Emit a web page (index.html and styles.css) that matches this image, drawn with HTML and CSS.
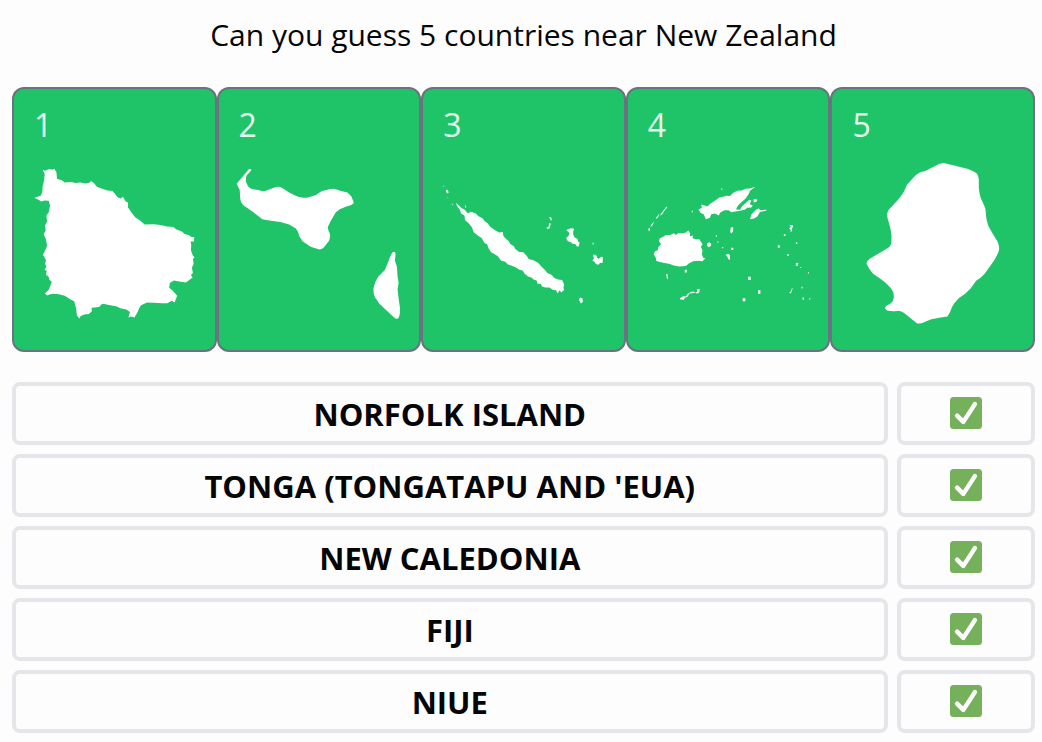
FILE: index.html
```
<!DOCTYPE html>
<html lang="en">
<head>
  <meta charset="UTF-8">
  <meta name="viewport" content="width=device-width, initial-scale=1.0">
  <title>Guess the Countries</title>
  <link rel="stylesheet" href="styles.css">
</head>
<body>
  <h1>Can you guess 5 countries near New Zealand</h1>

  <!-- Country cards -->
  <div class="cards">
    <div class="card">
      <span class="number">1</span>
      <svg class="map" viewBox="102 249 480 480" aria-hidden="true">
        <path d="M128 269L136 272L147 267L156 269L163 266L169 277L171 297L184 300L194 307L214 306L226 309L240 307L258 310L267 308L273 303L281 309L290 320L306 326L322 331L337 333L346 344L352 351L361 355L368 350L372 357L376 364L383 367L383 382L393 396L405 412L418 420L433 433L460 432L480 434L500 439L518 440L528 448L544 454L552 461L566 465L572 470L581 470L580 484L570 484L572 494L571 510L577 526L582 531L577 536L579 550L574 562L577 578L571 584L576 592L570 596L556 606L540 604L520 600L508 608L506 622L516 630L530 646L526 656L522 666L514 661L500 668L484 668L460 667L440 666L422 674L416 684L410 698L402 711L392 708L384 711L389 694L378 687L360 683L350 678L330 674L308 670L302 673L298 679L284 681L274 682L275 692L266 700L252 702L242 706L237 714L230 704L228 684L222 662L210 656L194 646L176 641L160 640L150 641L141 645L135 639L146 628L151 616L155 604L148 598L146 590L138 582L140 572L134 568L139 558L135 550L138 540L129 523L136 508L141 496L138 478L131 462L137 450L135 436L141 424L139 406L146 396L150 376L146 362L134 361L124 364L114 358L103 353L112 350L122 347L127 336L128 318L132 302L134 282Z"/>
      </svg>
    </div>
    <div class="card">
      <span class="number">2</span>
      <svg class="map" viewBox="80 249 480 480" aria-hidden="true">
        <path d="M110 267q6-1 7 4l-13 14q-6 9-2 23 5 14 16 19l20 3q14 6 24 1l24-9q12-5 22 1l22 14 24 12q20 6 34 2l22-6 14-10q14-6 38-9 10 1 20 6l22 5 12 12 7 18q-2 7-22 12l-20 8-12 10-14 24-10 20q2 12 7 20 0 16-4 22l-14 18q-6 8-16 6l-24-8-24-16-10-16q-3-14-10-22l-20-12-26-8-34-4-20-4-26-20-20-14q-18-10-20-26l-2-28-9-18z"/>
        <path d="M540 515q7-2 8 6l-2 20 6 18 2 30 3 18-3 20 4 34 3 20q2 24-6 33-6 2-12-4l-34-31-10-10-8-12q-10-12-9-34 4-20 14-34l20-20 10-24q6-20 14-30z"/>
      </svg>
    </div>
    <div class="card">
      <span class="number">3</span>
      <svg class="map" viewBox="82 249 480 480" aria-hidden="true">
        <path d="M121 368L132 378L138 384L146 388L156 399L166 395L180 400L188 408L200 414L206 422L216 430L224 440L238 450L250 457L261 455L262 466L268 474L278 482L284 492L294 498L298 506L310 515L322 516L332 526L338 536L352 540L366 547L376 558L386 568L394 578L406 583L414 592L426 597L438 599L444 612L442 622L444 628L436 636L430 629L425 639L420 629L410 628L400 621L388 621L378 618L374 610L364 610L362 600L354 598L346 591L336 588L326 580L320 570L310 568L300 561L288 556L276 552L268 544L256 541L246 528L234 520L226 516L218 504L214 492L206 488L198 474L184 464L174 456L168 440L158 428L148 420L146 406L136 400L132 388L124 378Z"/>
        <path d="M147 373l5 8-3 2zM91 330l5-1 3 8-4 3-4-4zM96 350l2 6-2-2zM108 370l4 4-3 1zM82 317l6 1-6 1zM399 411h6l3 8-4 2-2-5zM400 428l4 2-3 14-7 2-3-4 6-2zM450 449l9-3 4-2 8 1 3 1-3 8 0 8 4 9 9 5 2 8 4 2-2 12-5 1-6-8-8-1-6-5-8-2-5-10 7-6 3-8-3-4zM530 523l8 0 4 4-1 4 6 4 8-6 5 2-1 16-8 1-4 5-8-2-4-6-6-4 4-8zM488 657l4-6 7 3 1 10-6 5zM529 487h3l-1 8-2-4z"/>
      </svg>
    </div>
    <div class="card">
      <span class="number">4</span>
      <svg class="map" viewBox="83 249 480 480" aria-hidden="true">
        <path d="M234 388L244 383L242 373L250 375L260 379L270 370L284 361L296 352L308 350L318 347L328 348L338 338L350 332L364 331L374 326L388 325L404 320L388 332L384 342L374 356L362 366L352 376L346 388L358 389L364 378L376 368L386 359L392 361L387 372L396 376L392 382L380 383L372 389L358 392L344 394L332 396L324 390L312 390L300 396L294 406L284 400L272 402L268 413L256 417L250 403L240 398Z"/>
        <path d="M398 358l6-2 6 3-3 6-8 2zM388 417l4-14 14-14 8-4 5 5 18-1-1 3-18 3-8 14-10 6z"/>
        <path d="M138 379l3 3-8 8-6 10-7 7 0-3zM117 400l-3 10-6 6-2-2zM102 423l-6 13-6 5 3-8zM84 445l5-2 0 8-4 2z"/>
        <path d="M118 474L130 469L136 464L150 464L160 459L166 464L174 458L186 460L196 457L204 451L209 460L208 468L218 466L216 474L226 477L236 476L242 486L246 492L241 500L246 510L244 522L248 532L254 534L246 543L232 541L218 543L206 549L196 557L176 558L160 555L146 550L128 547L108 542L107 534L100 522L104 513L112 510L114 500L122 492L116 484Z"/>
        <path d="M330 443l5-3 3 3-1 11-5 6-3-5zM260 489l6-3 6 4-1 6-6 5-6-5zM315 524l8-4 5 5 0 14-6-4-1-5zM332 502h6v7h-6zM193 568h6v8h-6zM137 581l4 0 2 12-3 4zM178 654l10-7 8 1 6-8 10-6 8 0 5 3 6-4-2-6 8-2 0 9-5 5-10-2-8 1-8 1-4 9-8 4-4 6-10-1z"/>
        <path d="M286 464h2v6h-2zM291 483h2v5h-2zM305 500h3v4h-3zM302 325h3v4h-3zM214 392h3v4h-3zM382 589h8v10h-8zM412 629h7v11h-7zM366 653h8v9h-8zM505 434l10 0 2 6-4 4 1 8-5 4 1-7-5-4 5-6zM489 462h5v5h-5zM471 495h6v7h-6zM499 522h5v5h-5zM525 486h4v5h-4zM525 547l8 2-3 8-5-1zM538 560h3v3h-3zM561 575h3v4h-3zM514 621l1 4-5 14-5-2 5-5zM542 619h3v5h-3zM545 651h4v7h-4zM565 653h3v4h-3z"/>
      </svg>
    </div>
    <div class="card">
      <span class="number">5</span>
      <svg class="map" viewBox="85 249 480 480" aria-hidden="true">
        <path d="M335 257q12-8 24-8l22 5 36 9q28 6 40 17 7 8 7 24l0 20q2 20 6 30l10 22q6 12 5 28 2 20 8 34l10 18 16 26q8 14 5 29-6 16-16 32l-26 36-12 12-14 10-16 22-16 16-20 14q-14 14-20 26-4 14-14 29l-20 3-28 5-20 8q-16 8-24 3l-30-24q-16-13-28-12-14 2-30-1-10-6-3-14l14-8q10-8 9-20 1-14-10-26-14-16-26-24l-26-18q-12-14-20-30 0-8 10-15l24-14 30-18q10-5 11-20l0-18q-2-20-8-38-6-16-5-28 2-10 12-18l22-24 14-18 12-26 20-22q16-16 32-17z"/>
      </svg>
    </div>
  </div>

  <!-- Guesses -->
  <div class="guesses">
    <div class="guess">NORFOLK ISLAND</div>
    <div class="mark"><svg class="check" viewBox="0 0 36 36" role="img" aria-label="Correct"><rect width="36" height="36" rx="4"/><path d="M8 21l7 7L28 8"/></svg></div>

    <div class="guess">TONGA (TONGATAPU AND 'EUA)</div>
    <div class="mark"><svg class="check" viewBox="0 0 36 36" role="img" aria-label="Correct"><rect width="36" height="36" rx="4"/><path d="M8 21l7 7L28 8"/></svg></div>

    <div class="guess">NEW CALEDONIA</div>
    <div class="mark"><svg class="check" viewBox="0 0 36 36" role="img" aria-label="Correct"><rect width="36" height="36" rx="4"/><path d="M8 21l7 7L28 8"/></svg></div>

    <div class="guess">FIJI</div>
    <div class="mark"><svg class="check" viewBox="0 0 36 36" role="img" aria-label="Correct"><rect width="36" height="36" rx="4"/><path d="M8 21l7 7L28 8"/></svg></div>

    <div class="guess">NIUE</div>
    <div class="mark"><svg class="check" viewBox="0 0 36 36" role="img" aria-label="Correct"><rect width="36" height="36" rx="4"/><path d="M8 21l7 7L28 8"/></svg></div>
  </div>
</body>
</html>
```
FILE: styles.css
```
* {
  margin: 0;
  padding: 0;
  box-sizing: border-box;
}

body {
  font-family: 'Segoe UI', 'Open Sans', 'Noto Sans', sans-serif;
  font-size: 32px;
  line-height: 40px;
  background: #fdfdfd;
  color: #050505;
  padding: 15px 7px 8px 12px;
}

h1 {
  font-size: 30px;
  font-weight: 400;
  text-align: center;
  margin-bottom: 32px;
}

/* Country cards */
.cards {
  display: grid;
  grid-template-columns: repeat(5, 1fr);
  margin-bottom: 30px;
}

.card {
  display: flex;
  flex-direction: column;
  gap: 18px;
  padding: 16px 20px 26px;
  background: #1fc469;
  border: 2px solid #6b7280;
  border-radius: 12px;
}

.number {
  color: #e6faee;
}

.map {
  display: block;
  width: 100%;
  fill: #fff;
  overflow: visible;
}

/* Guesses */
.guesses {
  display: grid;
  grid-template-columns: repeat(7, 1fr);
  gap: 9px;
}

.guess,
.mark {
  display: flex;
  align-items: center;
  justify-content: center;
  height: 63px;
  border: 4px solid #e5e6e9;
  border-radius: 8px;
}

.guess {
  grid-column: span 6;
  font-size: 31px;
  font-weight: 700;
  padding-top: 2px;
}

.check {
  width: 32px;
  height: 32px;
}

.check rect {
  fill: #75b05b;
}

.check path {
  fill: none;
  stroke: #fff;
  stroke-width: 5;
  stroke-linecap: round;
  stroke-linejoin: round;
}
```
